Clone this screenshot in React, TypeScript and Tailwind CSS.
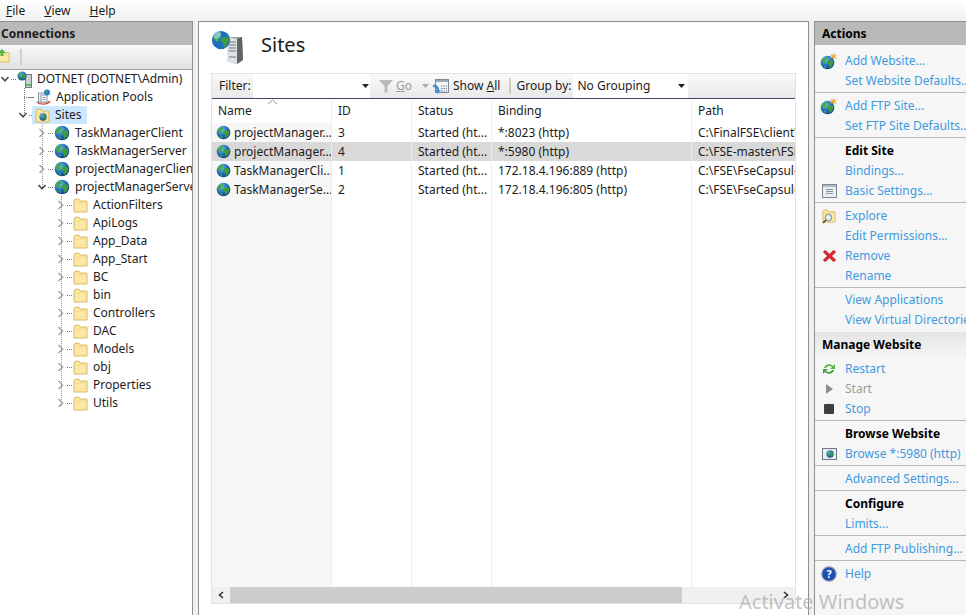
import React from "react";

const Chevron = ({ open }: { open?: boolean }) => (
  <svg width="10" height="10" viewBox="0 0 10 10" className="shrink-0">
    {open ? (
      <path d="M1.5 3 L5 6.8 L8.5 3" fill="none" stroke="#4a4a4a" strokeWidth="1.6" />
    ) : (
      <path d="M2.5 1 L6.5 5 L2.5 9" fill="none" stroke="#a6a6a6" strokeWidth="1.6" />
    )}
  </svg>
);

const Globe = ({ size = 16, flat }: { size?: number; flat?: boolean }) => (
  <svg width={size} height={size} viewBox="0 0 16 16" className="shrink-0">
    <defs>
      <radialGradient id="ocean" cx="35%" cy="30%" r="75%">
        <stop offset="0" stopColor="#7fc4ee" />
        <stop offset="0.55" stopColor="#1f6fc0" />
        <stop offset="1" stopColor="#12407f" />
      </radialGradient>
    </defs>
    <circle cx="8" cy="8" r="7.3" fill="url(#ocean)" />
    <path d="M2.2 5 C4 2.6 6 2 8 2.4 L7.2 5 L5.4 6 L6.4 8.4 L4.6 9.4 L2.2 7.2 Z" fill={flat ? "#3a9a4a" : "#45a945"} />
    <path d="M8.4 6 L13 5.2 L14.6 8 L12.6 12 L10.4 14 L9.4 10.4 L7.6 8.6 Z" fill="#3e9c3e" />
    <path d="M4.4 11.4 L6.6 12 L6.4 14 L4.6 13 Z" fill="#4aa84a" />
  </svg>
);

const NewGlobe = () => (
  <span className="relative block w-[18px] h-[18px] shrink-0">
    <span className="absolute left-0 bottom-0"><Globe size={15} /></span>
    <svg width="9" height="9" viewBox="0 0 9 9" className="absolute right-0 top-0">
      <path d="M4.5 0 L5.3 3.2 L8.5 2 L6 4.5 L8.5 7 L5.3 5.8 L4.5 9 L3.7 5.8 L.5 7 L3 4.5 L.5 2 L3.7 3.2 Z" fill="#f7a823" />
    </svg>
  </span>
);

const Folder = ({ size = 15 }: { size?: number }) => (
  <svg width={size} height={size} viewBox="0 0 15 15" className="shrink-0">
    <path d="M1 3 L1 14 L14 14 L14 3 L7 3 L6 1.2 L2 1.2 Z" fill="#fbe7a6" stroke="#d9b765" strokeWidth="1" />
    <path d="M1.6 5 H13.4" stroke="#f3d98b" strokeWidth="1" />
  </svg>
);

const ServerGlobe = ({ big }: { big?: boolean }) =>
  big ? (
    <svg width="34" height="34" viewBox="0 0 34 34" className="shrink-0">
      <path d="M16 7 L31 7 L32 30 L25 34 L16 31 Z" fill="#9aa1a6" />
      <path d="M16 7 L26 9 L26 34 L16 31 Z" fill="#dfe3e5" />
      <path d="M26 9 L31 7 L32 30 L26 34 Z" fill="#5c6468" />
      <path d="M18 12 H25 M18 15 H25 M18 18 H25 M18 21 H25 M18 27 H25" stroke="#6d767b" strokeWidth="1.2" />
      <g transform="translate(0 0) scale(1.25)"><circle cx="8" cy="8" r="7.3" fill="#1f6fc0" /><path d="M2.2 5 C4 2.6 6 2 8 2.4 L7.2 5 L5.4 6 L6.4 8.4 L4.6 9.4 L2.2 7.2 Z" fill="#49b04a" /><path d="M8.4 6 L13 5.2 L14.6 8 L12.6 12 L10.4 14 L9.4 10.4 L7.6 8.6 Z" fill="#3e9c3e" /><circle cx="5" cy="4" r="3" fill="#bfe4fa" opacity=".55" /></g>
    </svg>
  ) : (
    <span className="relative block w-[15px] h-[17px] shrink-0">
      <span className="absolute right-0 bottom-0 w-[7px] h-[14px] bg-[#c9cfd2] border border-[#6f7a80]" />
      <span className="absolute right-[1px] bottom-[2px] w-[5px] h-[2px] bg-[#6bb56b]" />
      <span className="absolute left-0 top-0"><Globe size={10} /></span>
    </span>
  );

const PoolsIcon = () => (
  <svg width="16" height="16" viewBox="0 0 16 16" className="shrink-0">
    <path d="M2 13 C5 16 12 16 15 12" fill="none" stroke="#d94a3a" strokeWidth="1.4" />
    <rect x="3.5" y="4" width="7" height="9" fill="#eef1f4" stroke="#8a97a3" />
    <rect x="6" y="6" width="6" height="7" fill="#fafbfc" stroke="#8a97a3" />
    <path d="M7.5 8.5 H10.5 M7.5 10.5 H10.5" stroke="#8a97a3" />
    <circle cx="12" cy="3.6" r="3" fill="#2a7fc9" />
    <path d="M10 3 L12 1.5 L13 4 Z" fill="#48a848" />
  </svg>
);

const SitesIcon = () => (
  <span className="relative block w-[15px] h-[15px] shrink-0">
    <Folder />
    <span className="absolute left-[4px] top-[5px]"><Globe size={8} /></span>
  </span>
);

const Caret = ({ color = "#222" }: { color?: string }) => (
  <svg width="7" height="4" viewBox="0 0 7 4" className="shrink-0">
    <path d="M0 0 H7 L3.5 4 Z" fill={color} />
  </svg>
);

const dots = (
  <span className="w-[5px] ml-[1px] mr-[1px] h-px shrink-0 border-t border-dotted border-[#777]" />
);

const TreeRow = ({ level, icon, text, open, leaf, selected }: { level: number; icon: React.ReactNode; text: string; open?: boolean; leaf?: boolean; selected?: boolean }) => (
  <div className="h-[18px] flex items-center whitespace-nowrap" style={{ paddingLeft: level * 19 - (level ? 1 : 0) }}>
    <span className="w-[10px] shrink-0 flex">{leaf ? null : <Chevron open={open} />}</span>
    {dots}
    <span className={selected ? "flex items-center h-[18px] bg-[#cce8ff] pl-[3px] pr-[5px] -ml-[3px]" : "flex items-center"}>
      {icon}
      <span className="ml-[5px]">{text}</span>
    </span>
  </div>
);

const folders = ["ActionFilters", "ApiLogs", "App_Data", "App_Start", "BC", "bin", "Controllers", "DAC", "Models", "obj", "Properties", "Utils"];

const columns = [
  { title: "ID", w: "w-[80px]", cells: ["3", "4", "1", "2"] },
  { title: "Status", w: "w-[80px]", cells: ["Started (ht...", "Started (ht...", "Started (ht...", "Started (ht..."] },
  { title: "Binding", w: "w-[200px]", cells: ["*:8023 (http)", "*:5980 (http)", "172.18.4.196:889 (http)", "172.18.4.196:805 (http)"] },
];
const names = ["projectManager...", "projectManager...", "TaskManagerCli...", "TaskManagerSe..."];
const paths = ["C:\\FinalFSE\\client\\", "C:\\FSE-master\\FSE", "C:\\FSE\\FseCapsule", "C:\\FSE\\FseCapsule"];

const Cell = ({ active, children }: { active: boolean; children: React.ReactNode }) => (
  <div className={`h-[19px] flex items-center whitespace-nowrap overflow-hidden ${active ? "bg-[#d9d9d9]" : ""}`}>{children}</div>
);

const ActionItem = ({ icon, children, muted }: { icon?: React.ReactNode; children: React.ReactNode; muted?: boolean }) => (
  <div className="h-5 flex items-center whitespace-nowrap relative pl-[30px]">
    {icon && <span className="absolute left-[5px] top-0 h-5 w-[18px] flex items-center justify-center">{icon}</span>}
    <span className={muted ? "text-[#9c9c9c]" : "text-[#3f9ae0]"}>{children}</span>
  </div>
);

const GroupTitle = ({ children }: { children: React.ReactNode }) => (
  <div className="h-5 flex items-center pl-[30px] font-bold text-black">{children}</div>
);

const Group = ({ children, last }: { children: React.ReactNode; last?: boolean }) => (
  <div className={`pt-[3px] pb-px ${last ? "" : "border-b border-[#b9b9b9]"}`}>{children}</div>
);

export default function App() {
  return (
    <div
      className="relative w-[966px] h-[615px] overflow-hidden flex flex-col bg-[#f0f0f0] text-[12px] text-[#1c1c1c]"
      style={{ fontFamily: '"Noto Sans", "Open Sans", sans-serif' }}
    >
      {/* menu */}
      <div className="h-[21px] shrink-0 flex items-center gap-[19px] pl-[6px] bg-gradient-to-b from-white to-[#f1f1f1]">
        <span><u>F</u>ile</span>
        <span><u>V</u>iew</span>
        <span><u>H</u>elp</span>
      </div>

      <div className="flex-1 flex min-h-0">
        {/* connections */}
        <div className="w-[193px] shrink-0 flex flex-col bg-white border-t border-r border-[#8f8f8f]">
          <div className="h-[23px] shrink-0 flex items-center pl-px font-bold bg-[#b9b9b9]">Connections</div>
          <div className="h-[25px] shrink-0 flex items-center bg-gradient-to-b from-[#f7f7f7] to-[#e2e2e2] border-b border-[#a0a0a0]">
            <span className="-ml-[3px] relative block w-[13px] h-[15px]">
              <Folder size={13} />
              <svg width="8" height="8" viewBox="0 0 8 8" className="absolute left-[1px] -top-[1px]"><path d="M4 0 L8 4 H5.5 V7 H2.5 V4 H0 Z" fill="#53b848" /></svg>
            </span>
            <span className="ml-[10px] w-[2px] h-[16px] bg-[#d0cfc0]" />
          </div>
          <div className="relative flex-1 overflow-hidden">
            <span className="absolute left-[24px] top-[18px] h-[27px] border-l border-dotted border-[#777]" />
            <span className="absolute left-[24px] top-[27px] w-[9px] border-t border-dotted border-[#777]" />
            <span className="absolute left-[42px] top-[54px] h-[63px] border-l border-dotted border-[#999]" />
            <span className="absolute left-[61px] top-[126px] h-[210px] border-l border-dotted border-[#999]" />
            <TreeRow level={0} open icon={<ServerGlobe />} text="DOTNET (DOTNET\Admin)" />
            <TreeRow level={1} leaf icon={<PoolsIcon />} text="Application Pools" />
            <TreeRow level={1} open selected icon={<SitesIcon />} text="Sites" />
            <TreeRow level={2} icon={<Globe />} text="TaskManagerClient" />
            <TreeRow level={2} icon={<Globe />} text="TaskManagerServer" />
            <TreeRow level={2} icon={<Globe />} text="projectManagerClient" />
            <TreeRow level={2} open icon={<Globe />} text="projectManagerServer" />
            {folders.map((f) => (
              <TreeRow key={f} level={3} icon={<Folder />} text={f} />
            ))}
          </div>
        </div>

        {/* center */}
        <div className="ml-[5px] w-[611px] shrink-0 flex flex-col bg-white border-t border-l border-r border-[#8f8f8f] pl-[12px] pr-[12px]">
          <div className="h-[51px] shrink-0 flex items-center">
            <span className="-mt-[2px]"><ServerGlobe big /></span>
            <span className="ml-[16px] text-[20px] -mt-[6px]">Sites</span>
          </div>
          <div className="flex-1 flex flex-col mb-[11px] border border-[#e3e3e3] min-h-0">
            <div className="h-[25px] shrink-0 flex items-center bg-gradient-to-b from-[#f9f9f9] to-[#e9e9e9] border-b border-[#3d4a68]">
              <span className="ml-[7px] w-[34px]">Filter:</span>
              <div className="w-[117px] h-[24px] bg-white flex items-center justify-end pr-[1px]"><Caret /></div>
              <svg width="16" height="16" viewBox="0 0 16 16" className="ml-[8px] shrink-0"><path d="M1 2 H15 L9.5 8 V14 L6.5 15 V8 Z" fill="#b9bcbe" /></svg>
              <span className="ml-[2px] text-[#9c9c9c] w-[26px]"><u>G</u>o</span>
              <Caret color="#a9a9a9" />
              <svg width="17" height="17" viewBox="0 0 17 17" className="ml-[4px] shrink-0">
                <rect x="2.5" y="1.5" width="13" height="13" fill="#f3f5f7" stroke="#7f8a95" />
                <rect x="3" y="2" width="12" height="2" fill="#9aa8b5" />
                <path d="M8 8 H14 M8 10.5 H14 M8 13 H14" stroke="#6a7f94" strokeDasharray="1.5 1" />
                <path d="M0 7 C3 6 6 8 6 12 L8 12 L4.5 16 L1.5 12 L3.5 12 C3.5 10 2 9 0 9 Z" fill="#3a8fd6" />
              </svg>
              <span className="ml-[3px]">Show <u>A</u>ll</span>
              <span className="ml-[9px] w-[2px] h-[16px] bg-[#d0cfc0]" />
              <span className="ml-[5px] w-[57px]">Group by:</span>
              <div className="w-[115px] h-[24px] bg-white flex items-center justify-between pl-[4px] pr-[3px]">
                <span>No Grouping</span>
                <Caret />
              </div>
            </div>
            <div className="relative flex-1 flex overflow-hidden min-h-0">
              <svg width="9" height="5" viewBox="0 0 9 5" className="absolute left-[56px] top-0"><path d="M0 5 L4.5 1 L9 5" fill="none" stroke="#9a9a9a" /></svg>
              <div className="w-[120px] shrink-0 bg-[#f7f7f7] border-r border-[#e8eef7]">
                <div className="h-[24px] pl-[6px] flex items-center bg-white">Name</div>
                {names.map((n, i) => (
                  <Cell key={i} active={i === 1}>
                    <span className="ml-[4px] mr-[3px] flex"><Globe size={15} /></span>
                    {n}
                  </Cell>
                ))}
              </div>
              {columns.map((c) => (
                <div key={c.title} className={`${c.w} shrink-0 border-r border-[#e8eef7]`}>
                  <div className="h-[24px] pl-[6px] flex items-center">{c.title}</div>
                  {c.cells.map((t, i) => (
                    <Cell key={i} active={i === 1}><span className="pl-[6px]">{t}</span></Cell>
                  ))}
                </div>
              ))}
              <div className="flex-1 min-w-0">
                <div className="h-[24px] pl-[6px] flex items-center">Path</div>
                {paths.map((t, i) => (
                  <Cell key={i} active={i === 1}><span className="pl-[6px]">{t}</span></Cell>
                ))}
              </div>
            </div>
            <div className="h-[16px] shrink-0 flex items-center bg-[#f0f0f0]">
              <svg width="8" height="8" viewBox="0 0 8 8" className="ml-[5px] shrink-0"><path d="M6 1 L2.5 4 L6 7" fill="none" stroke="#333" strokeWidth="1.6" /></svg>
              <div className="ml-[5px] w-[452px] h-[16px] bg-[#cdcdcd]" />
              <svg width="8" height="8" viewBox="0 0 8 8" className="ml-[100px] shrink-0"><path d="M2 1 L5.5 4 L2 7" fill="none" stroke="#333" strokeWidth="1.6" /></svg>
            </div>
          </div>
        </div>

        {/* actions */}
        <div className="ml-[5px] flex-1 min-w-0 flex flex-col bg-[#f6f6f6] border-t border-l border-[#8f8f8f]">
          <div className="h-[23px] shrink-0 flex items-center pl-[7px] font-bold text-black bg-[#b9b9b9]">Actions</div>
          <div className="pt-[3px]">
            <Group>
              <ActionItem icon={<NewGlobe />}>Add Website...</ActionItem>
              <ActionItem>Set Website Defaults...</ActionItem>
            </Group>
            <Group>
              <ActionItem icon={<NewGlobe />}>Add FTP Site...</ActionItem>
              <ActionItem>Set FTP Site Defaults...</ActionItem>
            </Group>
            <Group>
              <GroupTitle>Edit Site</GroupTitle>
              <ActionItem>Bindings...</ActionItem>
              <ActionItem icon={
                <svg width="15" height="14" viewBox="0 0 15 14"><rect x=".5" y=".5" width="14" height="13" fill="#eceff1" stroke="#7e8a92" /><rect x="1" y="1" width="13" height="2" fill="#b0bac1" /><path d="M4 5.5 H11 M4 7.5 H11 M4 9.5 H11" stroke="#8a949b" /></svg>
              }>Basic Settings...</ActionItem>
            </Group>
            <Group>
              <ActionItem icon={
                <span className="relative block w-[14px] h-[15px]">
                  <Folder size={14} />
                  <svg width="11" height="11" viewBox="0 0 11 11" className="absolute left-0 bottom-0"><circle cx="6.5" cy="4.5" r="3.2" fill="#e6f2fa" stroke="#6f7f8c" /><path d="M4 7 L1 10" stroke="#444" strokeWidth="1.6" /></svg>
                </span>
              }>Explore</ActionItem>
              <ActionItem>Edit Permissions...</ActionItem>
              <ActionItem icon={
                <svg width="15" height="14" viewBox="0 0 15 14"><path d="M2 2 L13 12 M13 2 L2 12" stroke="#d5282f" strokeWidth="3.2" /></svg>
              }>Remove</ActionItem>
              <ActionItem>Rename</ActionItem>
            </Group>
            <div className="pt-[2px] pb-px">
              <ActionItem>View Applications</ActionItem>
              <ActionItem>View Virtual Directories</ActionItem>
            </div>
            <div className="h-[26px] mt-px flex items-center pl-[7px] font-bold text-black bg-gradient-to-b from-[#e4e4e4] to-[#f6f6f6]">Manage Website</div>
            <div className="pt-px pb-px border-b border-[#b9b9b9]">
              <ActionItem icon={
                <svg width="14" height="14" viewBox="0 0 14 14"><path d="M2 6 C3 2 8 1 11 4 L13 2 V7 H8 L10 5 C8 3 5 4 4 6 Z" fill="#58b947" /><path d="M12 8 C11 12 6 13 3 10 L1 12 V7 H6 L4 9 C6 11 9 10 10 8 Z" fill="#3f9f38" /></svg>
              }>Restart</ActionItem>
              <ActionItem muted icon={
                <svg width="8" height="10" viewBox="0 0 8 10"><path d="M1 0 L8 5 L1 10 Z" fill="#8f8f8f" /></svg>
              }>Start</ActionItem>
              <ActionItem icon={<span className="block w-[10px] h-[10px] bg-[#3f3f3f] rounded-[1px]" />}>Stop</ActionItem>
            </div>
            <Group>
              <GroupTitle>Browse Website</GroupTitle>
              <ActionItem icon={
                <span className="relative block w-[15px] h-[12px] bg-[#e9eef2] border border-[#6f7a80]">
                  <span className="absolute left-[3px] top-[1px]"><Globe size={8} /></span>
                </span>
              }>Browse *:5980 (http)</ActionItem>
            </Group>
            <Group><ActionItem>Advanced Settings...</ActionItem></Group>
            <Group>
              <GroupTitle>Configure</GroupTitle>
              <ActionItem>Limits...</ActionItem>
            </Group>
            <Group><ActionItem>Add FTP Publishing...</ActionItem></Group>
            <Group last>
              <ActionItem icon={
                <svg width="16" height="16" viewBox="0 0 16 16"><circle cx="8" cy="8" r="7.2" fill="#1d4fb0" stroke="#8f98a8" strokeWidth="1.2" /><text x="8" y="12" textAnchor="middle" fontSize="11" fontWeight="700" fill="#fff">?</text></svg>
              }>Help</ActionItem>
            </Group>
          </div>
        </div>
      </div>

      <div className="absolute left-[739px] top-[589px] text-[20px] leading-[26px] text-[#a8a8a8]/70 whitespace-nowrap pointer-events-none">Activate Windows</div>
    </div>
  );
}
